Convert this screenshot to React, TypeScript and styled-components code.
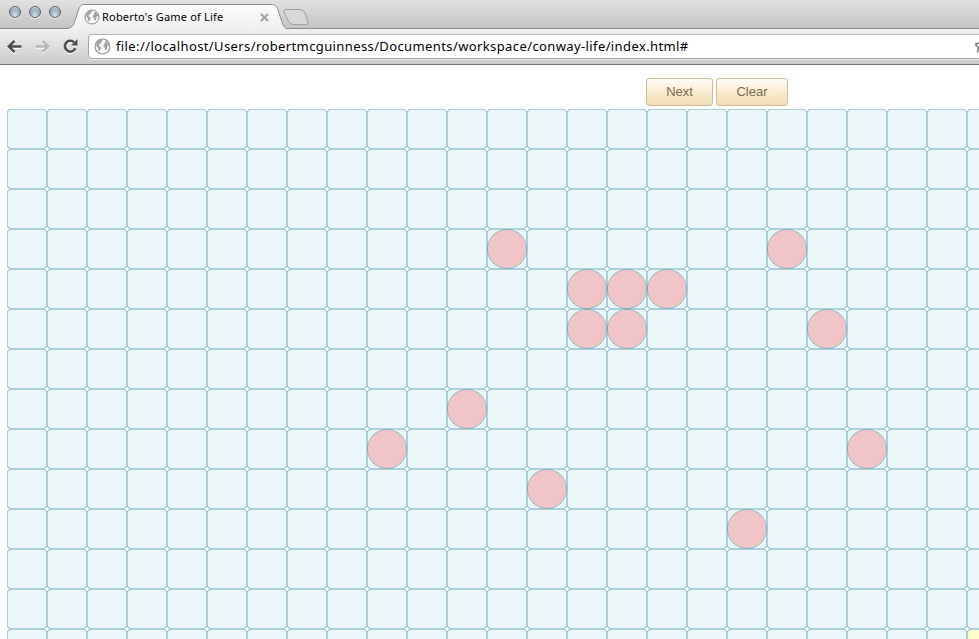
import React from 'react';
import styled, { createGlobalStyle } from 'styled-components';

const GlobalStyle = createGlobalStyle`
  * { box-sizing: border-box; }
  body { margin: 0; background: #fff; overflow: hidden; }
`;

const Window = styled.div`
  width: 979px;
  height: 639px;
  overflow: hidden;
  display: flex;
  flex-direction: column;
  font-family: 'Noto Sans', 'Open Sans', sans-serif;
`;

const TabStrip = styled.header`
  height: 29px;
  flex: none;
  display: flex;
  align-items: flex-start;
  background: linear-gradient(#e1e1e1, #c3c3c3);
  box-shadow: inset 0 -1px #8b8b8b;
`;

const Lights = styled.div`
  display: flex;
  gap: 8px;
  padding: 6px 0 0 9px;
  width: 66px;
  flex: none;
`;

const Light = styled.span`
  width: 12px;
  height: 12px;
  border-radius: 50%;
  border: 1px solid #596570;
  background: radial-gradient(ellipse at 50% 90%, #d4e4f0 0%, #a3b5c3 50%, #7d8e9c 100%);
  box-shadow: 0 1px 0 #f0f0f0, inset 0 2px 1px -1px #d3dde5;
`;

const Tab = styled.div`
  width: 220px;
  height: 29px;
  flex: none;
  display: grid;
`;

const TabShape = styled.svg`
  grid-area: 1 / 1;
  display: block;
`;

const NewTabShape = styled.svg`
  flex: none;
  margin-left: -4px;
`;

const TabContent = styled.div`
  grid-area: 1 / 1;
  display: flex;
  align-items: center;
  height: 24px;
  margin-top: 5px;
  padding-left: 18px;
  z-index: 1;
`;

const TabTitle = styled.span`
  width: 157px;
  margin-left: 2px;
  font-size: 11px;
  line-height: 20px;
  letter-spacing: 0.19px;
  color: #000;
  white-space: nowrap;
`;

const Toolbar = styled.nav`
  height: 36px;
  flex: none;
  display: flex;
  padding: 5px 0 0 6px;
  background: linear-gradient(#f0f0f0, #cacaca);
  border-bottom: 1px solid #777;
`;

const NavButton = styled.span<{ $dim?: boolean }>`
  width: 28px;
  height: 25px;
  flex: none;
  padding-top: 4px;
  color: ${(p) => (p.$dim ? '#b8b8b8' : '#4c4c4c')};
  svg { display: block; filter: drop-shadow(0 1px 0 #fff); }
`;

const AddressBar = styled.div`
  display: flex;
  align-items: center;
  flex: 1;
  height: 25px;
  margin-left: -2px;
  padding-left: 5px;
  background: #fff;
  border: 1px solid #a6a6a6;
  border-top-color: #b5b5b5;
  border-right: 0;
  border-radius: 4px 0 0 4px;
  box-shadow: 0 1px 0 #ececec;
`;

const Url = styled.span`
  flex: 1;
  margin-left: 5px;
  font-size: 13px;
  line-height: 23px;
  letter-spacing: 0.39px;
  color: #000;
  white-space: nowrap;
`;

const Controls = styled.div`
  height: 44px;
  flex: none;
  display: flex;
  gap: 3px;
  padding: 13px 0 0 646px;
`;

const ActionButton = styled.button<{ $width: number }>`
  width: ${(p) => p.$width}px;
  height: 28px;
  padding: 0;
  border: 1px solid #d1bc91;
  border-radius: 3px;
  background: linear-gradient(#fffdf8, #faecd0 50%, #f0dcb6);
  color: #7f6b4b;
  font: 13px/26px 'Liberation Sans', Arial, sans-serif;
`;

const Board = styled.main`
  margin-left: 7px;
  height: 530px;
  overflow: hidden;
  display: grid;
  grid-template-columns: repeat(25, 40px);
  grid-auto-rows: 40px;
`;

const notch = (corner: string) =>
  `radial-gradient(circle at ${corner}, #fff 0 1.5px, #91bfcd 2.2px 2.5px, transparent 3.1px) border-box`;

const Cell = styled.div<{ $hot: boolean }>`
  border: 1px solid transparent;
  background:
    ${notch('0 0')},
    ${notch('100% 0')},
    ${notch('0 100%')},
    ${notch('100% 100%')},
    linear-gradient(${(p) => (p.$hot ? '#ffffcc, #ffffcc' : '#ebf7f9, #ebf7f9')}) padding-box,
    linear-gradient(#acd0db, #acd0db) border-box;
`;

const Organism = styled.div`
  width: 40px;
  height: 40px;
  margin: -1px;
  border: 1px solid rgba(100, 130, 140, 0.5);
  border-radius: 50%;
  background: #efc5c8;
  background-clip: padding-box;
`;

const Globe = ({ size }: { size: number }) => (
  <svg width={size} height={size} viewBox="0 0 16 16">
    <circle cx="8" cy="8" r="7" fill="#fafafa" stroke="#8a8a8a" />
    <path d="M2.500 4.500 4.500 2.300 7.500 1.700 8 3 6.500 4 6.600 5 5 5.800 4.300 7 6.200 8.200 6.600 9.800 5.600 11.200 5.300 13 4 11.300 3.700 9 2 7.200Z" fill="#a2a2a2" />
    <path d="M10 3.500 11.700 3 13.800 5.500 14.300 7.500 12.700 7 12.400 9.600 11.300 11.800 10.300 11 10.100 9 8.800 8.100 9 6.500 10.300 5.200Z" fill="#a2a2a2" />
  </svg>
);

const ArrowIcon = ({ forward }: { forward?: boolean }) => (
  <svg width="17" height="16" viewBox="0 0 17 16" fill="none" stroke="currentColor" strokeWidth="2.5">
    <path d={forward ? 'M1.5 8.5H14M8.5 2.8 14.2 8.5 8.5 14.2' : 'M15.5 8.5H3M8.5 2.8 2.8 8.5 8.5 14.2'} />
  </svg>
);

const COLUMNS = 25;
const ROWS = 14;
const alive = new Set([
  '3:12', '3:19', '4:14', '4:15', '4:16', '5:14', '5:15',
  '5:20', '7:11', '8:9', '8:21', '9:13', '10:18',
]);

export default function App() {
  return (
    <Window>
      <GlobalStyle />
      <TabStrip>
        <Lights><Light /><Light /><Light /></Lights>
        <Tab>
          <TabShape width="220" height="29" viewBox="0 0 220 29">
            <defs>
              <linearGradient id="tabFill" x1="0" y1="0" x2="0" y2="1">
                <stop offset="0" stopColor="#fbfbfb" />
                <stop offset="1" stopColor="#f0f0f0" />
              </linearGradient>
            </defs>
            <path d="M0 29V28.5C6 28 7 26 8.5 22L12.5 10C14 6 15 4.5 19 4.5H205C209 4.5 210.5 6 212 10L216 22C217 25 218 27 220 28.5V29Z" fill="url(#tabFill)" />
            <path d="M0 28.5C6 28 7 26 8.5 22L12.5 10C14 6 15 4.5 19 4.5H205C209 4.5 210.5 6 212 10L216 22C217 25 218 27 220 28.5" fill="none" stroke="#8c8c8c" />
          </TabShape>
          <TabContent>
            <Globe size={16} />
            <TabTitle>Roberto's Game of Life</TabTitle>
            <svg width="11" height="11" viewBox="0 0 11 11"><path d="m2 2 7 7M9 2 2 9" stroke="#a5a5a5" strokeWidth="2.2" /></svg>
          </TabContent>
        </Tab>
        <NewTabShape width="30" height="29" viewBox="0 0 30 29">
          <path d="M3.500 9.500H18Q21.500 9.500 23 13L26 21.500Q27 24.500 24 24.500H11Q8 24.500 6.500 21L2 12Q1 9.500 3.500 9.500Z" fill="#d7d7d7" stroke="#9f9f9f" />
        </NewTabShape>
      </TabStrip>
      <Toolbar>
        <NavButton><ArrowIcon /></NavButton>
        <NavButton $dim><ArrowIcon forward /></NavButton>
        <NavButton>
          <svg width="17" height="16" viewBox="0 0 17 16">
            <path d="M13.300 10.300A5.400 5.400 0 1 1 12 4.300" fill="none" stroke="currentColor" strokeWidth="2.500" />
            <path d="M15.500 1V7.500H9Z" fill="currentColor" />
          </svg>
        </NavButton>
        <AddressBar>
          <Globe size={17} />
          <Url>file://localhost/Users/robertmcguinness/Documents/workspace/conway-life/index.html#</Url>
          <svg width="4" height="16" viewBox="0 0 4 16"><path d="M5 4.500H1V6.500L3.500 8.500 2.500 13.500" fill="none" stroke="#777" strokeWidth="1.500" /></svg>
        </AddressBar>
      </Toolbar>
      <Controls>
        <ActionButton $width={67}>Next</ActionButton>
        <ActionButton $width={72}>Clear</ActionButton>
      </Controls>
      <Board>
        {Array.from({ length: ROWS * COLUMNS }, (_, i) => {
          const row = Math.floor(i / COLUMNS);
          const column = i % COLUMNS;
          return (
            <Cell key={i} $hot={row === 13 && column === 24}>
              {alive.has(`${row}:${column}`) && <Organism />}
            </Cell>
          );
        })}
      </Board>
    </Window>
  );
}
